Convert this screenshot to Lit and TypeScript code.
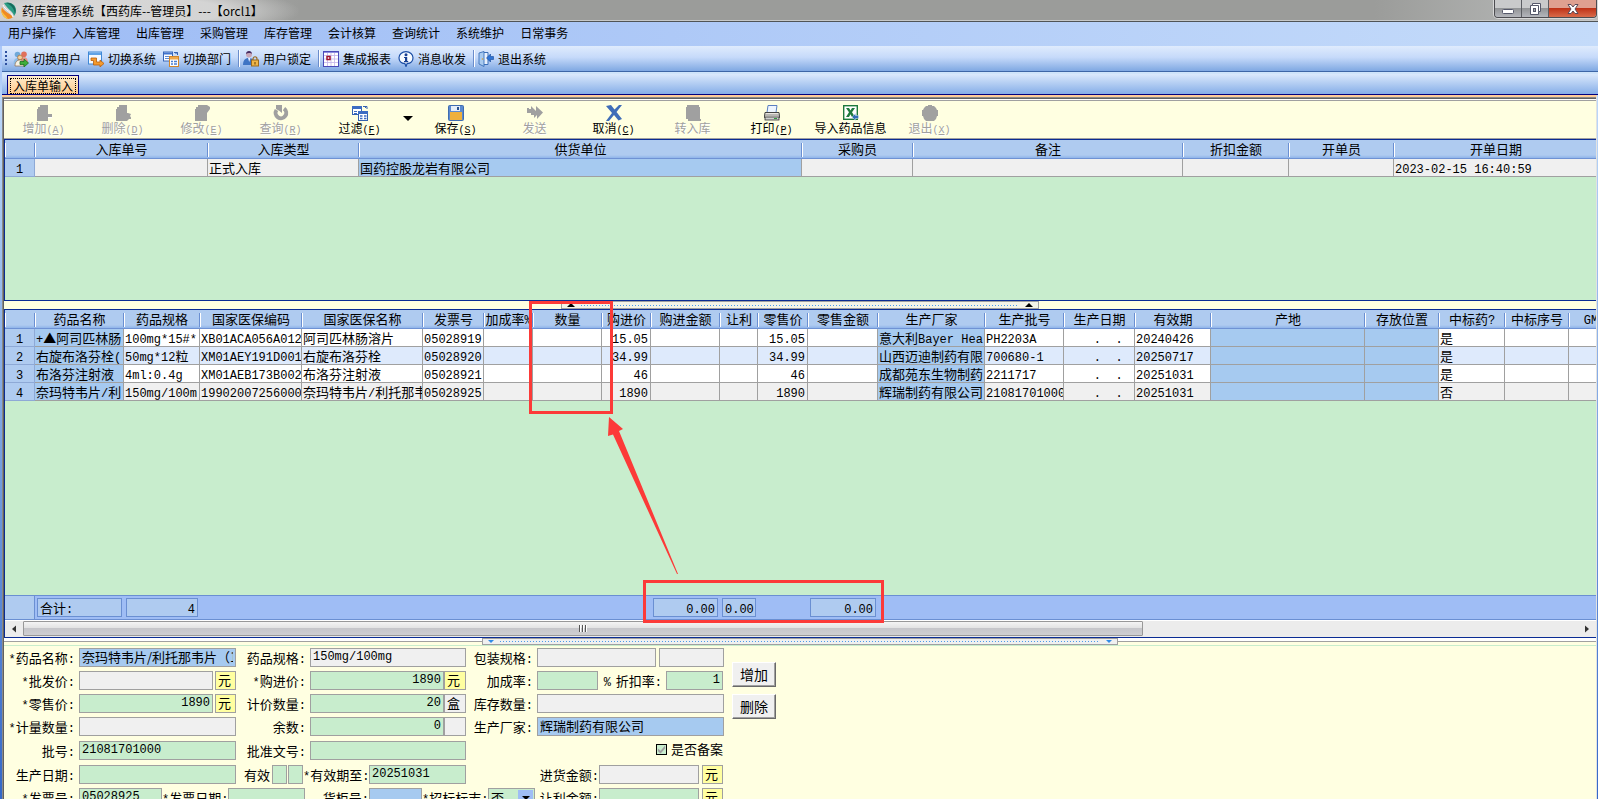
import { LitElement, html, svg, css, nothing } from 'lit';
import { customElement } from 'lit/decorators.js';
import { classMap } from 'lit/directives/class-map.js';

/* ---------- icons, all on a 16 x 16 board ---------- */
const icon = (body: unknown, w = 16) =>
  html`<svg class="ico" width=${w} height="16" viewBox="0 0 16 16" aria-hidden="true">${body}</svg>`;

const ICONS: Record<string, unknown> = {
  users: svg`<circle cx="4.500" cy="3.500" r="2.800" fill="#6fa8d8"/><circle cx="11" cy="3.200" r="2.800" fill="#e0705c"/>
    <path d="M0.500 13c0-4 1.500-6 4-6s4 2 4 6z" fill="#8dbce6"/><path d="M7 12c0-4 1.500-6 4-6s4 2 4 6z" fill="#e79384"/>
    <circle cx="7" cy="6.500" r="2.400" fill="#f3cf9a" stroke="#a8672f" stroke-width=".7"/><path d="M2 15c0-4 2-6 5-6s4 2 4 6z" fill="#f6f1e4" stroke="#8c6a4a" stroke-width=".7"/>
    <path d="M7 10.500h4V8l4.500 4-4.500 4v-2.500H7z" fill="#3fae3a" stroke="#1c6f1e" stroke-width=".8"/>`,
  system: svg`<rect x=".5" y="1" width="13" height="12" fill="#f4f9ff" stroke="#3f88d6"/><rect x="1" y="1.500" width="12" height="2.500" fill="#5fa2e6"/>
    <path d="M3 7h5.500v4H12V9l4 3.500-4 3.500v-2H5.500v-4.500H3z" fill="#f59a2c" stroke="#b85e0c" stroke-width=".8"/>`,
  depart: svg`<rect x=".5" y="1" width="9" height="9" fill="#fff" stroke="#3966b8"/><rect x="1" y="1.500" width="8" height="2" fill="#3f73cf"/>
    <path d="M2 5.500h4M2 7.500h4" stroke="#5c89d6"/><path d="M11 1.500h3.500V4M12.500 3l2-2" stroke="#3260b5" fill="none"/>
    <rect x="6.500" y="5.500" width="9" height="10" fill="#fff" stroke="#d0862c"/><rect x="7" y="6" width="8" height="2.500" fill="#f0a84a"/>
    <path d="M8 10.500h2M11 10.500h3M8 13h2M11 13h3" stroke="#4a7fd4" stroke-width="1.500"/>`,
  lock: svg`<circle cx="6" cy="3.500" r="3" fill="#c7a6b8"/><path d="M3 3c0-4 6-4 6 0-1-1-4-1.500-6 0z" fill="#452a60"/>
    <path d="M0 14c0-4.500 2-7 6-7s5 2.500 5 7z" fill="#3e74c4"/><path d="M5 7l1.200 4L7.500 7z" fill="#e8f0ff"/>
    <path d="M10 9.500V8c0-3 4-3 4 0v1.500" fill="none" stroke="#9a6a20" stroke-width="1.200"/><rect x="8.500" y="9" width="7" height="6" fill="#f0b648" stroke="#9a6a20"/><rect x="11.500" y="11" width="1" height="2.500" fill="#603d08"/>`,
  report: svg`<rect x=".5" y=".5" width="15" height="15" fill="#fff" stroke="#4a4ab8"/><path d="M1 4.500h14M1 8h14M1 11.500h14M4.500 1v14M8 1v14M11.500 1v14" stroke="#c3b4ea" stroke-width=".8"/>
    <path d="M1 1.500h14" stroke="#8f8fe0"/><rect x="4" y="5.500" width="3" height="3" fill="#fff" stroke="#a0122c" stroke-width="1.500"/>`,
  info: svg`<path d="M8 .7c4 0 7 2.600 7 6 0 3.200-2.500 5.600-6 6L8 15.500l-1-2.800c-3.500-.4-6-2.800-6-6 0-3.400 3-6 7-6z" fill="#f7fbff" stroke="#1c4fa6" stroke-width="1.200"/>
    <circle cx="8" cy="3.700" r="1.500" fill="#173f92"/><path d="M6 6h3.200v4h1v1.200H6V10h1V7H6z" fill="#173f92"/>`,
  exit: svg`<path d="M4 1.500h6v12H4z" fill="#eaf3ff" stroke="#3b6fb8"/><path d="M1 2l5-1.500v15L1 13z" fill="#a9cbf0" stroke="#3b6fb8" stroke-width=".9"/><circle cx="4.500" cy="8" r=".8" fill="#d79a2c"/>
    <path d="M15.500 5.500h-3V3L8.500 7l4 4V8.500h3z" fill="#2f74d4" stroke="#154a9a" stroke-width=".6"/>`,
  add: svg`<path d="M5 0h7v9h4v3h-4v4H1V4h1V2h2V0z" fill="#a0a0a0"/><path d="M12 12.500h4" stroke="#fff"/>`,
  del: svg`<path d="M5 0h7v8h1l3 1-1 2 2 3h-3l-2 2H1V4h1V2h2V0z" fill="#a0a0a0"/>`,
  edit: svg`<path d="M5 0h8l3 2v2l-3 4v8H1V4h1V2h2V0z" fill="#a0a0a0"/>`,
  query: svg`<path d="M11 3.600a5.300 5.300 0 1 1-7.500 1.400" fill="none" stroke="#a0a0a0" stroke-width="4"/><path d="M3 0h6v8L6.500 6 3 4z" fill="#a0a0a0"/>`,
  filter: svg`<rect x=".5" y="1.500" width="9" height="8" fill="#fff" stroke="#3461b0"/><rect x="0" y="1" width="10" height="3" fill="#3c6cc2"/>
    <path d="M2 6.500h3M2 8.500h3" stroke="#3c6cc2"/><path d="M11 1.500h4V4M13 3l2-2" stroke="#3461b0" fill="none"/>
    <rect x="6.500" y="6.500" width="9" height="9" fill="#fff" stroke="#3461b0"/><rect x="6" y="6" width="10" height="3" fill="#3c6cc2"/>
    <path d="M8 11h2.500M12 11h2.500M8 13.500h2.500M12 13.500h2.500" stroke="#3c6cc2" stroke-width="1.400"/>`,
  save: svg`<rect x=".5" y=".5" width="15" height="15" rx="1" fill="#5b8ad0" stroke="#3f6cb0"/><rect x="3" y="1" width="9" height="5" fill="#e4edf8"/><rect x="9" y="2" width="2" height="3" fill="#27508f"/><rect x="2" y="7" width="12" height="8" fill="#eeb03c"/>`,
  send: svg`<path d="M0 3h2v1h2V1l5 5V1l7 6.500L10 14v-4l-3 3v-3H4V8H0z" fill="#a0a0a0"/>`,
  cancel: svg`<path d="M0 1l5-1 3.500 4.500L13 0h3l-5.500 7L16 14l-3.500 1.500L8 10l-5 6H0l6-8z" fill="#3f6db8"/>`,
  stock: svg`<path d="M2 0h12v2h1v12h1v2H3v-2H1V2h1z" fill="#a0a0a0"/>`,
  print: svg`<path d="M4 .5h9l-1 7H3z" fill="#eef5ff" stroke="#5b7fc0"/><path d="M1 7.500h14l.7 5H.3z" fill="#e9e6e0" stroke="#444"/><path d="M1 10h14" stroke="#888"/><rect x="1" y="12" width="14" height="3" fill="#cfcfcf" stroke="#333" stroke-width=".8"/><path d="M10 13.500h3" stroke="#2f9a40"/>`,
  excel: svg`<rect x=".7" y=".7" width="13.600" height="13.600" fill="#fff" stroke="#1d7a3c" stroke-width="1.400"/><path d="M3 3h3l1.500 2.500L9 3h3L9 7.300 12 12H9L7.400 9.300 6 12H3l3-4.700z" fill="#1d7a3c"/><path d="M15.500 10.500h-3V8.500L9 12l3.500 3.500v-2h3z" fill="#2f6fb8" stroke="#e8f4ff" stroke-width=".4"/>`,
  quit: svg`<path d="M6 0h4v1h2l2 2 1 2h1v6h-1l-1 3-2 2H4l-2-2-1-3H0V5h1l1-2 2-2h2z" fill="#a0a0a0"/>`,
};

/* Western runs are set in the fixed-pitch face beside the Chinese text. */
const mix = (t: string) =>
  t.split(/([\x20-\x7e]+)/).map((p) => (/^[\x20-\x7e]+$/.test(p) ? html`<span class="lat">${p}</span>` : p));

type Col = { t: string; w: number };
const HEAD1: Col[] = [
  { t: '', w: 30 }, { t: '入库单号', w: 173 }, { t: '入库类型', w: 151 }, { t: '供货单位', w: 443 },
  { t: '采购员', w: 111 }, { t: '备注', w: 270 }, { t: '折扣金额', w: 106 }, { t: '开单员', w: 105 }, { t: '开单日期', w: 204 },
];
const HEAD2: Col[] = [
  { t: '', w: 30 }, { t: '药品名称', w: 89 }, { t: '药品规格', w: 76 }, { t: '国家医保编码', w: 102 },
  { t: '国家医保名称', w: 121 }, { t: '发票号', w: 61 }, { t: '加成率%', w: 49 }, { t: '数量', w: 69 },
  { t: '购进价', w: 49 }, { t: '购进金额', w: 69 }, { t: '让利', w: 38 }, { t: '零售价', w: 50 },
  { t: '零售金额', w: 70 }, { t: '生产厂家', w: 107 }, { t: '生产批号', w: 79 }, { t: '生产日期', w: 71 },
  { t: '有效期', w: 76 }, { t: '产地', w: 154 }, { t: '存放位置', w: 74 }, { t: '中标药?', w: 66 },
  { t: '中标序号', w: 64 }, { t: 'GMP证', w: 64 },
];
const ROWS2 = [
  ['1', '+▲阿司匹林肠', '100mg*15#*', 'XB01ACA056A012', '阿司匹林肠溶片', '05028919', '', '', '15.05', '', '', '15.05', '', '意大利Bayer Hea', 'PH2203A', '    .  .', '20240426', '', '', '是', '', ''],
  ['2', '右旋布洛芬栓(', '50mg*12粒', 'XM01AEY191D001', '右旋布洛芬栓', '05028920', '', '', '34.99', '', '', '34.99', '', '山西迈迪制药有限', '700680-1', '    .  .', '20250717', '', '', '是', '', ''],
  ['3', '布洛芬注射液', '4ml:0.4g', 'XM01AEB173B002', '布洛芬注射液', '05028921', '', '', '46', '', '', '46', '', '成都苑东生物制药', '2211717', '    .  .', '20251031', '', '', '是', '', ''],
  ['4', '奈玛特韦片/利', '150mg/100m', '19902007256000', '奈玛特韦片/利托那韦', '05028925', '', '', '1890', '', '', '1890', '', '辉瑞制药有限公司', '21081701000', '    .  .', '20251031', '', '', '否', '', ''],
];
const BLUE2 = new Set([1, 13, 17, 18]);
const RIGHT2 = new Set([8, 11]);
const TOTALS: Record<number, string> = { 1: '合计:', 2: '4', 9: '0.00', 10: '0.00', 12: '0.00' };

const MENU = ['用户操作', '入库管理', '出库管理', '采购管理', '库存管理', '会计核算', '查询统计', '系统维护', '日常事务'];
const QUICK: [string, string, boolean][] = [
  ['users', '切换用户', false], ['system', '切换系统', false], ['depart', '切换部门', true], ['lock', '用户锁定', true],
  ['report', '集成报表', false], ['info', '消息收发', true], ['exit', '退出系统', false],
];
const TOOLS: [string, string, string, boolean][] = [
  ['add', '增加', 'A', false], ['del', '删除', 'D', false], ['edit', '修改', 'E', false], ['query', '查询', 'R', false],
  ['filter', '过滤', 'F', true], ['save', '保存', 'S', true], ['send', '发送', '', false], ['cancel', '取消', 'C', true],
  ['stock', '转入库', '', false], ['print', '打印', 'P', true], ['excel', '导入药品信息', '', true], ['quit', '退出', 'X', false],
];

/* A form line is a run of parts: k kind, t text, w width, g gap before, c colour. */
type Part = { k: 'label' | 'field' | 'unit' | 'check' | 'select'; t: string; w: number; g?: number; c?: string; r?: boolean; n?: string };
const L = (t: string, w: number): Part => ({ k: 'label', t, w });
const F = (t: string, w: number, c = 'green', r = false, g = 4, n = ''): Part => ({ k: 'field', t, w, c, r, g, n });
const U = (t: string, w: number, g = 0, c = 'yellow'): Part => ({ k: 'unit', t, w, g, c });
const FORM: Part[][] = [
  [L('*药品名称:', 70), F('奈玛特韦片/利托那韦片（1', 157, 'blue'), L('药品规格:', 70), F('150mg/100mg', 156, 'grey'), L('包装规格:', 67), F('', 119, 'grey'), F('', 65, 'grey', false, 3, '包装单位')],
  [L('*批发价:', 70), F('', 134, 'grey'), U('元', 21, 2), L('*购进价:', 70), F('1890', 134, 'green', true), U('元', 22), L('加成率:', 67), F('', 61), L('%', 13), L('折扣率:', 51), F('1', 57, 'green', true)],
  [L('*零售价:', 70), F('1890', 134, 'green', true), U('元', 21, 2), L('计价数量:', 70), F('20', 134, 'green', true), U('盒', 22, 0, 'grey'), L('库存数量:', 67), F('', 187, 'grey')],
  [L('*计量数量:', 70), F('', 157, 'grey'), L('余数:', 70), F('0', 134, 'green', true), U('', 22, 0, 'grey'), L('生产厂家:', 67), F('辉瑞制药有限公司', 187, 'blue')],
  [L('批号:', 70), F('21081701000', 157), L('批准文号:', 70), F('', 156), { k: 'check', t: '是否备案', w: 68, g: 190 }],
  [L('生产日期:', 70), F('', 157), L('有效', 34), F('', 15, 'green', false, 2), F('', 15, 'green', false, 1, '有效月数'), L('*有效期至:', 66), F('20251031', 97, 'green', false, 0), L('进货金额:', 133), F('', 100, 'grey', false, 0), U('元', 21, 3)],
  [L('*发票号:', 70), F('05028925', 83), L('*发票日期:', 66), F('', 77, 'green', false, 0), L('货柜号:', 64), F('', 53, 'blue', false, 0), L('*招标标志:', 66), { k: 'select', t: '否', w: 47 }, L('让利金额:', 64), F('', 100, 'green', false, 0), U('元', 21, 3)],
];

@customElement('app-root')
export class AppRoot extends LitElement {
  static styles = css`
    :host { display: block; }
    * { box-sizing: border-box; }
    button, input, select { font: inherit; color: inherit; margin: 0; border-radius: 0; }
    button { border: 0; background: none; padding: 0; }
    .ico { display: block; flex: none; }
    .shell { position: relative; height: 100vh; display: flex; flex-direction: column; overflow: hidden; color: #000; font: 12px/16px "Noto Sans CJK SC", sans-serif; background: linear-gradient(#a9c6f8 70px, #bcd8fa 100px, #3468c8); }
    .lat { font-family: "Liberation Mono", monospace; font-size: 12px; line-height: 0; white-space: pre; }

    .title { flex: none; height: 22px; display: flex; align-items: center; padding-left: 1px; gap: 5px; border-bottom: 1px solid #505456; box-shadow: inset 0 -1px #c6c8c8;
      background: radial-gradient(ellipse 170px 26px at 130px 11px, #dfdfdfcc 55%, #dfdfdf00), linear-gradient(90deg, #c4c4c4, #9b9c9a 300px, #9b9c9a 86%, #bcbebd); }
    .title h1 { flex: 1; margin: 0; font-size: 12px; font-weight: 400; line-height: 20px; }
    .wins { align-self: flex-start; display: flex; height: 18px; margin-right: 1px; border: 1px solid #4c4c50; border-top: 0; border-radius: 0 0 4px 4px; overflow: hidden; box-shadow: 0 0 0 1px #d8d8d8; }
    .wins button { display: grid; place-items: center; width: 27px; background: linear-gradient(#c9cacb 45%, #929496 50%, #b4b6bc); border-right: 1px solid #5b5d62; }
    .wins .close { width: 47px; border: 0; background: linear-gradient(#dfa090 45%, #bf3318 50%, #d96b4a); }

    .menu { flex: none; height: 24px; display: flex; align-items: center; gap: 16px; padding-left: 8px; background: linear-gradient(90deg, #9ebcf5, #c4dbfa); }
    .menu button { height: 24px; line-height: 20px; padding-bottom: 2px; }
    .quick { flex: none; height: 26px; margin-left: 2px; display: flex; align-items: center; padding-left: 3px; border-bottom: 1px solid #3d66a6; background: linear-gradient(#dfebfd, #c6dafa 45%, #7fa8e2); }
    .grip { width: 2px; height: 16px; margin-right: 6px; background: repeating-linear-gradient(#2e4f9e 0 2px, #0000 2px 4px); }
    .quick button { display: flex; align-items: center; gap: 4px; margin-right: 7px; }
    .rule { width: 2px; height: 17px; margin-right: 3px; background: linear-gradient(90deg, #6a8ccb 50%, #fff 50%); }

    .tabs { flex: none; height: 23px; margin-left: 2px; display: flex; align-items: flex-end; padding-left: 5px; border-top: 2px solid #cfe4fa; border-bottom: 1px solid #000080; background: linear-gradient(#dbe9fc, #86aee8); }
    .tabs button { height: 19px; padding: 2px; border: 1px solid #000080; border-bottom: 0; background: linear-gradient(#ffeccc, #ffc98a); }
    .tabs span { display: block; width: 66px; height: 16px; line-height: 15px; outline: 1px dotted #000; outline-offset: -1px; text-align: center; font-size: 12px; }

    .work { flex: 1; min-height: 0; margin-right: 1px; margin-left: 2px; border-top: 2px solid #ffcc99; border-right: 1px solid #e2e2e2; display: flex; flex-direction: column; }
    .frame { flex: 1; min-height: 0; display: flex; flex-direction: column; border: solid #8a8a8a; border-width: 1px 0 0 1px; box-shadow: inset 1px 1px #606060; padding: 2px 0 0 1px; background: #fff; }
    .tools { flex: none; height: 39px; display: flex; border: solid #a0a0a0; border-width: 1px 0; background: #ffffe1; }
    .tools button { width: 79px; display: flex; flex-direction: column; align-items: center; padding-top: 4px; white-space: nowrap; line-height: 13px; }
    .tools .drop { width: 17px; padding: 15px 0 0; }
    .tools .drop::before { content: ""; border: 5px solid #0000; border-top-color: #000; border-bottom: 0; }
    .tools .off { color: #a0a0a0; text-shadow: 1px 1px #fff; }
    .key { font: 10px/13px "Liberation Mono", monospace; }

    .pane { border: 1px solid #0a2c94; border-right: 0; background: #c8edcd; overflow: hidden; }
    .orders { flex: none; height: 162px; }
    .lines { flex: 1; min-height: 0; display: flex; flex-direction: column; }
    .fill { flex: 1; min-height: 0; overflow: hidden; }
    table { table-layout: fixed; border-collapse: separate; border-spacing: 0; font-size: 13px; line-height: 17px; }
    th, td { padding: 0; overflow: hidden; white-space: pre; font-weight: 400; }
    thead th { height: 19px; line-height: 16px; text-align: center; border-bottom: 1px solid #6f92d4;
      background: linear-gradient(#fff, #fff) left 3px / 1px 14px no-repeat, linear-gradient(#6a8fd2, #6a8fd2) right 3px / 1px 14px no-repeat, linear-gradient(#afcbf0 15px, #8fb4ea); }
    .data td, .data th { height: 18px; padding-left: 1px; border: solid #a0a0a0; border-width: 0 1px 1px 0; background: #fff; }
    .data th { padding: 0; text-align: center; background: #afcbf0; border-color: #8ea9d6; }
    .data .alt td { background: #deeafc; }
    .data .now td { background: #f0f0f0; }
    .data tr td.blue { background: #a6caf0; }
    .data .right { text-align: right; padding-right: 2px; }

    .sum { flex: none; border-top: 1px solid #6a8fd2; border-bottom: 1px solid #6a8fd2; background: #9fbdf5; overflow: hidden; }
    .sum th { height: 23px; background: #afcbf0; border-right: 1px solid #6a8fd2; }
    .sum td { height: 23px; padding: 0 2px; }
    .sum output { display: block; height: 19px; border: 1px solid #6a8fd2; background: #afcbf0; padding: 0 2px; text-align: right; }
    .sum .lead { text-align: left; }

    .scroll { flex: none; height: 17px; display: flex; align-items: stretch; background: #ececec; border-top: 1px solid #fff; }
    .scroll button { width: 18px; display: grid; place-items: center; }
    .track { flex: 1; display: flex; }
    .thumb { width: 72%; height: 15px; display: flex; align-items: center; justify-content: center; gap: 1px; border: 1px solid #989898; border-radius: 1px; background: linear-gradient(#f4f4f4, #e2e2e2 48%, #c6c6ca 50%, #cfcfd2); }
    .thumb i { width: 2px; height: 7px; background: linear-gradient(90deg, #555 50%, #fff 50%); }

    .split { flex: none; height: 8px; display: flex; justify-content: center; background: #ffffe1; }
    .handle { display: flex; align-items: center; justify-content: space-between; gap: 6px; height: 8px; width: 30%; padding: 0 5px; border: solid #a0a0a0; border-width: 1px 1px 1px 1px; background: #f4f4e8; }
    .handle::after, .handle::before { content: ""; order: 2; border: 4px solid #0000; border-top: 0; border-bottom: 4px solid #000; }
    .handle::before { order: 0; }
    .dots { order: 1; flex: 1; height: 1px; background: repeating-linear-gradient(90deg, #4a9bea 0 1px, #0000 1px 3px); }
    .low { border-bottom: 1px solid #c8edcd; background: linear-gradient(#fff 3px, #a0a0a0 3px 4px, #ffffe1 4px); }
    .low .handle { height: 7px; width: 40%; background: #f0f0f0; }
    .low .handle::after, .low .handle::before { border: 3px solid #0000; border-bottom: 0; border-top: 3px solid #2f8be8; }

    .detail { flex: none; height: 153px; overflow: hidden; display: flex; gap: 8px; padding: 2px 0 0 1px; background: #ffffe1; }
    .rows { display: grid; grid-template-rows: 23px 23px 23px 24px 24px 23px 23px; font-size: 13px; width: 719px; flex: none; }
    .row { display: flex; align-items: flex-start; }
    .row label { flex: none; text-align: right; white-space: nowrap; line-height: 20px; }
    .field { flex: none; height: 19px; border: 1px solid #a0a0a0; padding: 0 2px 2px; font: 13px/16px "Noto Sans CJK SC", sans-serif; }
    .mono { font: 12px/16px "Liberation Mono", monospace; }
    .end { text-align: right; }
    .green { background: #c8edcd; }
    .blue { background: #a6caf0; }
    .grey { background: #f0f0f0; }
    .yellow { background: #ffffa0; }
    .unit { flex: none; height: 19px; border: 1px solid #a0a0a0; padding-left: 2px; line-height: 15px; }
    .check { display: flex; align-items: center; gap: 4px; }
    .check input { appearance: none; flex: none; width: 11px; height: 11px; border: 1px solid #000; background: #c8edcd; }
    .check input::before { content: ""; display: block; width: 9px; height: 9px; background: #a0a0a0; clip-path: polygon(10% 45%, 40% 70%, 90% 10%, 90% 45%, 40% 100%, 10% 75%); }
    .row .check label { line-height: 16px; }
    .pick { position: relative; flex: none; height: 19px; }
    .pick select { appearance: none; width: 100%; height: 19px; padding: 0 2px; border: 1px solid #a0a0a0; background: linear-gradient(#9fbdf5, #9fbdf5) right 1px top 1px / 15px 15px no-repeat #c8edcd; line-height: 16px; }
    .pick::after { content: ""; position: absolute; right: 5px; top: 8px; border: 4px solid #0000; border-top-color: #000; border-bottom: 0; pointer-events: none; }
    .acts { display: flex; flex-direction: column; gap: 7px; padding-top: 14px; }
    .acts button { width: 44px; height: 25px; padding-bottom: 2px; font-size: 14px; line-height: 20px; background: #f0f0f0; border: 1px solid; border-color: #fff #696969 #696969 #fff; box-shadow: inset -1px -1px #a0a0a0; }

    .note { position: absolute; border: 3px solid #fc3a38; pointer-events: none; }
    .n1 { left: 529px; top: 301px; width: 84px; height: 113px; }
    .n2 { left: 643px; top: 580px; width: 241px; height: 43px; }
    .arrow { position: absolute; left: 600px; top: 410px; pointer-events: none; }
  `;

  private cols(c: Col[]) {
    return html`<colgroup>${c.map((x) => html`<col style="width:${x.w}px">`)}</colgroup>`;
  }
  private head(c: Col[]) {
    return html`<thead><tr>${c.map((x) => html`<th scope="col">${mix(x.t)}</th>`)}</tr></thead>`;
  }
  private width(c: Col[]) {
    return c.reduce((a, x) => a + x.w, 0);
  }

  private part(p: Part, r: number, i: number, row: Part[]) {
    const id = `f${r}-${i}`;
    const box = `width:${p.w}px;margin-left:${p.g ?? 0}px`;
    if (p.k === 'label') {
      const owner = row[i + 1] && ['field', 'select'].includes(row[i + 1].k) ? i + 1 : i - 1;
      return html`<label for="f${r}-${owner}" style=${box}>${mix(p.t)}</label>`;
    }
    if (p.k === 'unit') return html`<span class="unit ${p.c}" style=${box}>${p.t}</span>`;
    if (p.k === 'check')
      return html`<span class="check" style=${box}><input type="checkbox" id=${id} checked><label for=${id}>${p.t}</label></span>`;
    if (p.k === 'select')
      return html`<span class="pick" style=${box}><select id=${id}><option>${p.t}</option></select></span>`;
    return html`<input id=${id} aria-label=${p.n || nothing} .value=${p.t} style=${box}
      class=${classMap({ field: true, mono: /^[\x20-\x7e]+$/.test(p.t), end: !!p.r, [p.c!]: true })}>`;
  }

  render() {
    return html`
      <div class="shell">
        <header class="title">
          <svg class="ico" width="16" height="18" viewBox="0 0 16 18" aria-hidden="true">
            <path d="M3 1C8-1 15 2 15 8c0 3-1 5-2 6-1-5-7-7-10-13z" fill="#2a9d84"/><path d="M5 1c5 2 8 5 9 11 1-2 1-5-1-8S8 0 5 1z" fill="#176a5c"/>
            <path d="M1 5c-2 5 1 11 6 12 2 0 4-1 5-2C9 11 3 10 1 5z" fill="#f08a24"/><path d="M0 7c0 5 3 9 7 10-1-3-6-5-7-10z" fill="#f9c440"/><path d="M2 3c2 5 9 7 10 12" stroke="#fff" fill="none"/>
          </svg>
          <h1>药库管理系统【西药库--管理员】---【orcl1】</h1>
          <div class="wins">
            <button aria-label="最小化"><svg width="14" height="12" viewBox="0 0 14 12"><rect x="1.500" y="6.500" width="11" height="4" rx="1" fill="#fff" stroke="#55586a"/></svg></button>
            <button aria-label="还原"><svg width="14" height="14" viewBox="0 0 14 14"><path d="M4.500 1.500h8v8h-2v3h-8v-9h2z" fill="#fff" stroke="#55586a"/><path d="M4.500 3.500h6v6" fill="none" stroke="#55586a"/><rect x="5.500" y="6.500" width="2" height="3" fill="#aaa" stroke="#55586a"/></svg></button>
            <button class="close" aria-label="关闭"><svg width="12" height="12" viewBox="0 0 12 12"><path d="M1 1.500h3l2 2.500 2-2.500h3L8 6l3 4.500H8L6 8l-2 2.500H1L4 6z" fill="#fff" stroke="#5a4a58"/></svg></button>
          </div>
        </header>
        <nav class="menu">${MENU.map((m) => html`<button>${m}</button>`)}</nav>
        <div class="quick"><span class="grip"></span>${QUICK.map(([k, t, s]) => html`<button>${icon(ICONS[k])}${t}</button>${s ? html`<span class="rule"></span>` : nothing}`)}</div>
        <div class="tabs"><button><span>入库单输入</span></button></div>
        <main class="work"><div class="frame">
          <div class="tools">
            ${TOOLS.map(([k, t, key, on]) => html`<button class=${on ? '' : 'off'} ?disabled=${!on}>${icon(ICONS[k])}<span>${t}${key ? html`<span class="key">(<u>${key}</u>)</span>` : nothing}</span></button>${k === 'filter' ? html`<button class="drop" aria-label="过滤选项"></button>` : nothing}`)}
          </div>
          <section class="pane orders">
            <table style="width:${this.width(HEAD1)}px">
              ${this.cols(HEAD1)}${this.head(HEAD1)}
              <tbody class="data"><tr class="now"><th scope="row">${mix('1')}</th><td></td><td>正式入库</td><td class="blue">国药控股龙岩有限公司</td><td></td><td></td><td></td><td></td><td>${mix('2023-02-15 16:40:59')}</td></tr></tbody>
            </table>
          </section>
          <div class="split"><div class="handle"><span class="dots"></span></div></div>
          <section class="pane lines">
            <div class="fill">
              <table style="width:${this.width(HEAD2)}px">
                ${this.cols(HEAD2)}${this.head(HEAD2)}
                <tbody class="data">${ROWS2.map((r, n) => html`<tr class=${['', 'alt', '', 'now'][n]}>${r.map((c, i) =>
                  i === 0 ? html`<th scope="row">${mix(c)}</th>` : html`<td class=${classMap({ blue: BLUE2.has(i), right: RIGHT2.has(i) })}>${mix(c)}</td>`)}</tr>`)}</tbody>
              </table>
            </div>
            <div class="sum">
              <table style="width:${this.width(HEAD2)}px">${this.cols(HEAD2)}
                <tbody><tr>${HEAD2.map((_, i) => (i === 0 ? html`<th></th>` : html`<td>${TOTALS[i] ? html`<output class=${i === 1 ? 'lead' : ''}>${mix(TOTALS[i])}</output>` : nothing}</td>`))}</tr></tbody>
              </table>
            </div>
            <div class="scroll">
              <button aria-label="向左"><svg width="6" height="8" viewBox="0 0 6 8"><path d="M5 .5v7L1 4z" fill="#333"/></svg></button>
              <div class="track"><div class="thumb"><i></i><i></i><i></i></div></div>
              <button aria-label="向右"><svg width="6" height="8" viewBox="0 0 6 8"><path d="M1 .5v7L5 4z" fill="#333"/></svg></button>
            </div>
          </section>
          <div class="split low"><div class="handle"><span class="dots"></span></div></div>
          <section class="detail">
            <div class="rows">${FORM.map((row, r) => html`<div class="row">${row.map((p, i) => this.part(p, r, i, row))}</div>`)}</div>
            <div class="acts"><button>增加</button><button>删除</button></div>
          </section>
        </div></main>
        <div class="note n1"></div>
        <div class="note n2"></div>
        <svg class="arrow" width="80" height="166" viewBox="0 0 80 166" aria-hidden="true"><path d="M9 7l14 12-4 2 59 143h-1L13 24.500 8 26z" fill="#fc3a38"/></svg>
      </div>`;
  }
}
